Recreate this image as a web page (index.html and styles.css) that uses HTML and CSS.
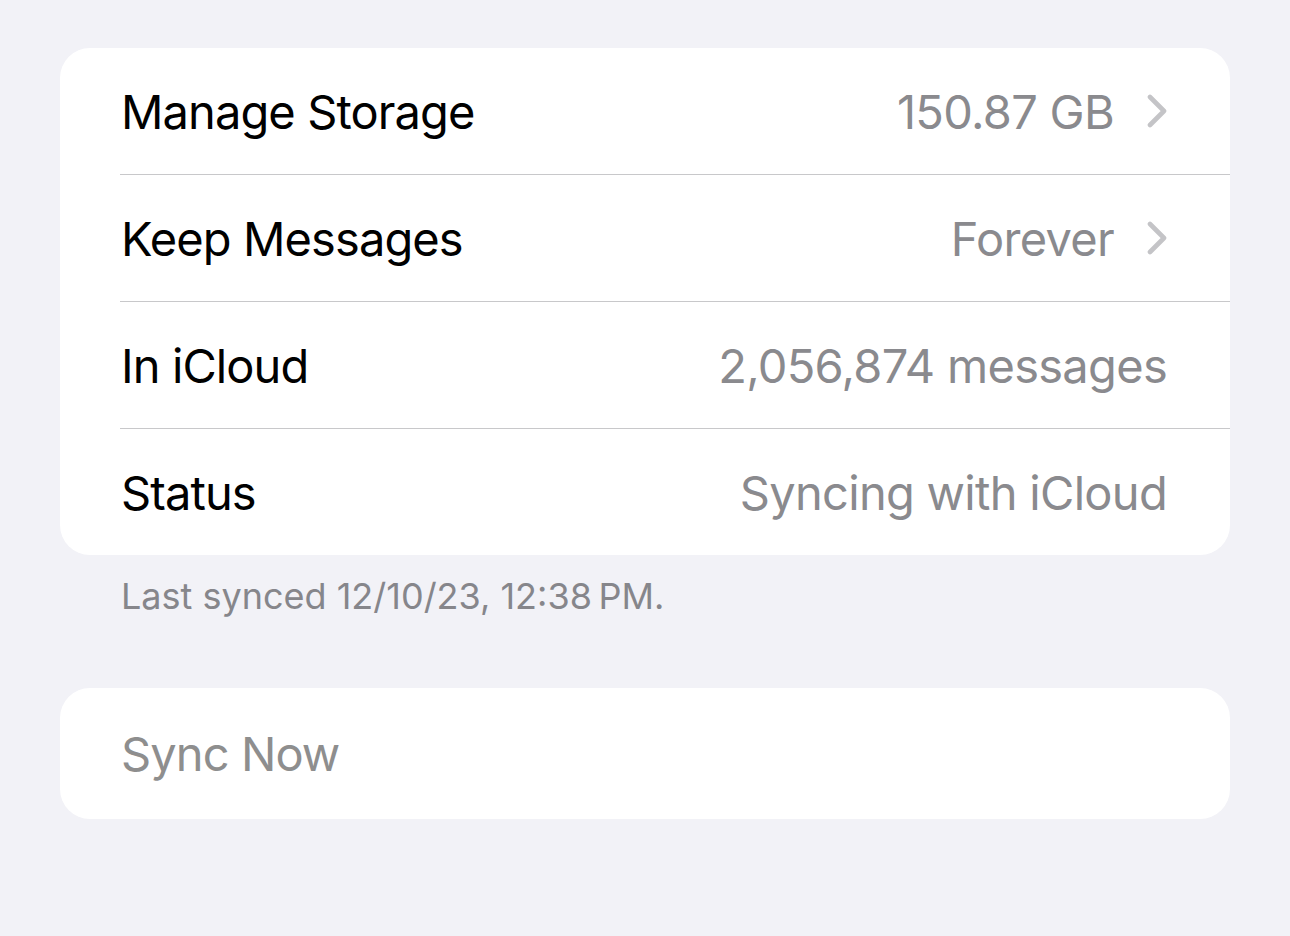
FILE: index.html
```html
<!DOCTYPE html>
<html>
<head>
<meta charset="utf-8">
<link rel="stylesheet" href="styles.css">
</head>
<body>
<main class="page">
  <section class="group">
    <div class="row">
      <div class="row-inner">
        <span class="label">Manage Storage</span>
        <span class="value">150.87 GB</span>
        <svg class="chev" width="20" height="34" viewBox="0 0 20 34"><path d="M3 3 L17 17 L3 31" fill="none" stroke="#c4c4c7" stroke-width="4.6" stroke-linecap="round" stroke-linejoin="round"/></svg>
      </div>
    </div>
    <div class="row">
      <div class="row-inner">
        <span class="label">Keep Messages</span>
        <span class="value">Forever</span>
        <svg class="chev" width="20" height="34" viewBox="0 0 20 34"><path d="M3 3 L17 17 L3 31" fill="none" stroke="#c4c4c7" stroke-width="4.6" stroke-linecap="round" stroke-linejoin="round"/></svg>
      </div>
    </div>
    <div class="row">
      <div class="row-inner">
        <span class="label">In iCloud</span>
        <span class="value">2,056,874 messages</span>
      </div>
    </div>
    <div class="row">
      <div class="row-inner">
        <span class="label">Status</span>
        <span class="value">Syncing with iCloud</span>
      </div>
    </div>
  </section>
  <p class="footer">Last synced 12/10/23, 12:38&#8239;PM.</p>
  <section class="group single">
    <div class="row">
      <div class="row-inner">
        <span class="label disabled">Sync Now</span>
      </div>
    </div>
  </section>
</main>
</body>
</html>
```

FILE: styles.css
```css
html, body {
  margin: 0;
  padding: 0;
  background: #f2f2f7;
}
body {
  font-family: Inter, "Noto Sans", sans-serif;
  -webkit-font-smoothing: antialiased;
}
.page {
  padding: 48px 60px 0 60px;
  display: flex;
  flex-direction: column;
}
.group {
  background: #ffffff;
  border-radius: 30px;
  overflow: hidden;
}
.row {
  padding-left: 60px;
}
.row-inner {
  height: 126px;
  display: flex;
  align-items: center;
  padding-left: 1px;
  padding-right: 63px;
  border-bottom: 1px solid #c8c8ca;
}
.row:last-child .row-inner {
  border-bottom: none;
}
.label {
  font-size: 47px;
  color: #000;
  flex: 1;
  letter-spacing: -0.9px;
}
.value {
  font-size: 47px;
  color: #8a8a8e;
  letter-spacing: -0.7px;
}
.chev {
  margin-left: 33px;
  display: block;
}
.disabled {
  color: #8e8e8e;
}
.footer {
  margin: 0;
  padding: 19px 0 0 61px;
  height: 133px;
  box-sizing: border-box;
  font-size: 36px;
  color: #86868b;
  letter-spacing: 0;
}
.single .row-inner {
  height: 131px;
}
```
